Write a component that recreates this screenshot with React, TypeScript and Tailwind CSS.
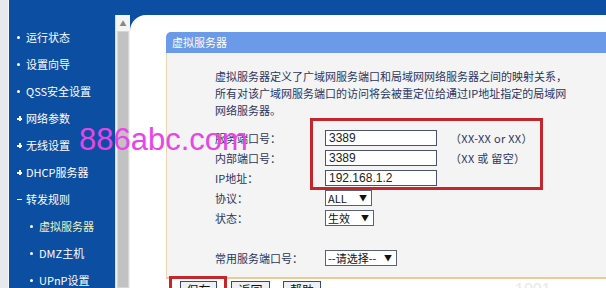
import React from "react";

const cjk = "font-['Noto_Sans_CJK_SC','Noto_Sans',sans-serif]";
const latin = "font-['Liberation_Sans','Noto_Sans_CJK_SC',sans-serif]";

type MenuItem = { mark: "dot" | "plus" | "minus"; label: string; sub?: boolean; active?: boolean };

const menu: MenuItem[] = [
  { mark: "dot", label: "运行状态" },
  { mark: "dot", label: "设置向导" },
  { mark: "dot", label: "QSS安全设置" },
  { mark: "plus", label: "网络参数" },
  { mark: "plus", label: "无线设置" },
  { mark: "plus", label: "DHCP服务器" },
  { mark: "minus", label: "转发规则" },
  { mark: "dot", label: "虚拟服务器", sub: true, active: true },
  { mark: "dot", label: "DMZ主机", sub: true },
  { mark: "dot", label: "UPnP设置", sub: true },
];

const Mark = ({ kind }: { kind: MenuItem["mark"] }) => {
  if (kind === "dot") return <span className="w-[3px] h-[3px] rounded-full bg-white" />;
  if (kind === "plus")
    return (
      <span className="relative w-[5px] h-[5px]">
        <span className="absolute left-0 top-[2px] w-[5px] h-[1.5px] bg-white" />
        <span className="absolute left-[2px] top-0 w-[1.5px] h-[5px] bg-white" />
      </span>
    );
  return <span className="w-[5px] h-[1.5px] bg-white" />;
};

const Select = ({ value, width }: { value: string; width: string }) => (
  <div className={`${width} h-[16px] border border-[#5a6078] bg-white flex items-center justify-between pl-[2px] pr-[4px] text-[11px] text-[#111] leading-none`}>
    <span className={cjk}>{value}</span>
    <span className="text-[8px]">▼</span>
  </div>
);

const Field = ({ value }: { value: string }) => (
  <div className={`w-[112px] h-[16px] border border-[#4a5270] bg-white pl-[3px] flex items-center text-[12px] text-[#222] leading-none ${latin}`}>
    {value}
  </div>
);

const Row = ({ label, children, hint }: { label: string; children: React.ReactNode; hint?: string }) => (
  <div className="h-[20px] flex items-center">
    <div className="w-[110px] whitespace-nowrap">{label}</div>
    {children}
    {hint && <div className="ml-[13px] whitespace-nowrap text-[11px] tracking-[0.3px]">{hint}</div>}
  </div>
);

export default function App() {
  return (
    <div className={`relative w-[606px] h-[288px] overflow-hidden bg-white flex ${cjk}`}>
      <div className="w-[9px] shrink-0 bg-[#e8e9ec] border-r border-[#f6f6f6]" />
      <div className="flex-1 flex bg-[#0b4ea2]">
        <nav className="w-[106px] shrink-0 pt-[24px] text-[11px] text-white">
          {menu.map((m) => (
            <div key={m.label} className={`h-[27px] flex items-center ${m.sub ? "pl-[21px]" : "pl-[8px]"}`}>
              <span className="w-[9px] flex items-center">
                <Mark kind={m.mark} />
              </span>
              <span className={`whitespace-nowrap ${m.active ? "text-[#eef3c4]" : ""}`}>{m.label}</span>
            </div>
          ))}
        </nav>
        <div className="flex-1 flex pt-[15px]">
          <div className="w-[15px] shrink-0 bg-[#f1f1f1] border-l border-[#dcdcdc] flex flex-col">
            <div className="h-[16px] flex items-center justify-center text-[7px] text-[#888] bg-[#f4f4f4]">▲</div>
            <div className="flex-1 mx-[1px] bg-[#c2c2c2] border border-[#d6d6d6]" />
          </div>
          <main className="flex-1 bg-white rounded-tl-[16px] pl-[36px] pt-[17px] text-[11px] text-[#2b3561]">
            <div className="h-[21px] bg-[#6a9ae8] rounded-tl-[5px] text-white flex items-center pl-[6px]">虚拟服务器</div>
            <div className="h-[226px] bg-[#f4f4f4] border-l border-[#ecd6b4] border-b-2 border-b-[#eec895] pl-[48px] pt-[15px]">
              <p className="leading-[17px] whitespace-nowrap">
                虚拟服务器定义了广域网服务端口和局域网网络服务器之间的映射关系，
                <br />
                所有对该广域网服务端口的访问将会被重定位给通过IP地址指定的局域网
                <br />
                网络服务器。
              </p>
              <div className="mt-[9px]">
                <Row label="服务端口号：" hint="（XX-XX or XX）">
                  <Field value="3389" />
                </Row>
                <Row label="内部端口号：" hint="（XX 或 留空）">
                  <Field value="3389" />
                </Row>
                <Row label="IP地址：">
                  <Field value="192.168.1.2" />
                </Row>
                <Row label="协议：">
                  <Select value="ALL" width="w-[47px]" />
                </Row>
                <Row label="状态：">
                  <Select value="生效" width="w-[49px]" />
                </Row>
                <div className="mt-[20px]">
                  <Row label="常用服务端口号：">
                    <Select value="--请选择--" width="w-[72px]" />
                  </Row>
                </div>
              </div>
            </div>
            <div className="flex pt-[2px] pl-[14px] gap-[14px] text-[12px] text-[#111]">
              <div className="w-[37px] h-[18px] border border-[#3b4870] bg-[#eef0f4] flex items-center justify-center">保存</div>
              <div className="w-[39px] h-[18px] border border-[#3b4870] bg-[#eef0f4] flex items-center justify-center">返回</div>
              <div className="w-[38px] h-[18px] ml-[-1px] border border-[#3b4870] bg-[#eef0f4] flex items-center justify-center">帮助</div>
            </div>
          </main>
        </div>
      </div>

      <div className="absolute left-[310px] top-[118px] w-[233px] h-[72px] border-[3px] border-[#c3262d]" />
      <div className="absolute left-[169px] top-[276px] w-[58px] h-[20px] border-[3px] border-[#c3262d]" />
      <div className={`absolute left-[79px] top-[124px] text-[31px] leading-[31px] text-[#e844e8] ${latin}`}>886abc.com</div>
      <div className={`absolute left-[515px] top-[282px] text-[16px] leading-[16px] text-[#e8e8e8] ${latin}`}>1001</div>
    </div>
  );
}
